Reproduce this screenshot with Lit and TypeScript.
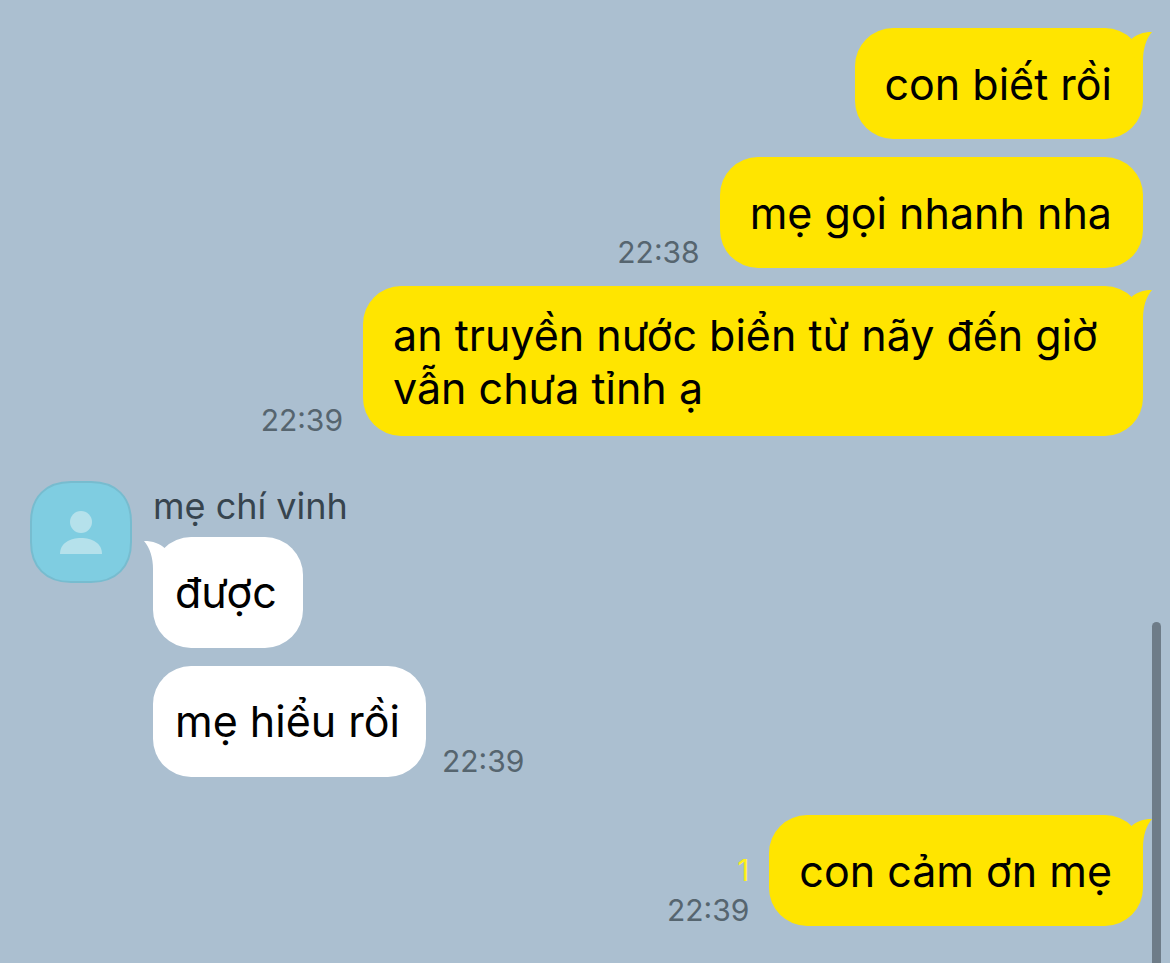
import { LitElement, html, svg, css, nothing } from "lit";
import { customElement, property } from "lit/decorators.js";

interface Message {
  text: string;
  time?: string;
  unread?: number;
  tail?: boolean;
}

interface Group {
  mine: boolean;
  sender?: string;
  messages: Message[];
}

const GROUPS: Group[] = [
  {
    mine: true,
    messages: [
      { text: "con biết rồi", tail: true },
      { text: "mẹ gọi nhanh nha", time: "22:38" },
      { text: "an truyền nước biển từ nãy đến giờ vẫn chưa tỉnh ạ", time: "22:39", tail: true },
    ],
  },
  {
    mine: false,
    sender: "mẹ chí vinh",
    messages: [{ text: "được", tail: true }, { text: "mẹ hiểu rồi", time: "22:39" }],
  },
  {
    mine: true,
    messages: [{ text: "con cảm ơn mẹ", time: "22:39", unread: 1, tail: true }],
  },
];

@customElement("chat-message")
export class ChatMessage extends LitElement {
  @property({ attribute: false }) message!: Message;
  @property({ type: Boolean, reflect: true }) mine = false;

  static styles = css`
    :host {
      display: flex;
      align-items: flex-end;
      gap: 16px;
    }
    :host([mine]) {
      flex-direction: row-reverse;
      gap: 20px;
    }
    .bubble {
      position: relative;
      box-sizing: border-box;
      display: flex;
      align-items: center;
      min-height: 111px;
      max-width: min(780px, 70vw);
      padding: 22px 26px 22px 22px;
      border-radius: 38px;
      background: #fff;
      color: #000;
      font-size: 43px;
      line-height: 53px;
    }
    :host([mine]) .bubble {
      padding: 23px 31px 21px 30px;
      background: #ffe500;
    }
    .text {
      margin: 0;
    }
    .tail {
      position: absolute;
      top: 4px;
      left: -9px;
      width: 30px;
      height: 35px;
      fill: #fff;
    }
    :host([mine]) .tail {
      left: auto;
      right: -9px;
      fill: #ffe500;
    }
    .meta {
      display: flex;
      flex-direction: column;
      align-items: flex-end;
      font-size: 30px;
      line-height: 32px;
      color: #56656f;
    }
    .unread {
      color: #fff01a;
      line-height: 48px;
    }
  `;

  private tail() {
    const path = this.mine
      ? svg`<path d="M9 7.500C14 2.500 21 0 30 0C24 7 21 17 21 28V35L2 12Z" />`
      : svg`<path d="M21 7.500C16 2.500 9 0 0 0C6 7 9 17 9 28V35L28 12Z" />`;
    return html`<svg class="tail" viewBox="0 0 30 35" aria-hidden="true">${path}</svg>`;
  }

  render() {
    const { text, time, unread, tail } = this.message;
    return html`
      <div class="bubble">
        ${tail ? this.tail() : nothing}
        <p class="text">${text}</p>
      </div>
      ${time
        ? html`<div class="meta">
            ${unread ? html`<span class="unread">${unread}</span>` : nothing}
            <time>${time}</time>
          </div>`
        : nothing}
    `;
  }
}

@customElement("app-root")
export class AppRoot extends LitElement {
  static styles = css`
    :host {
      display: block;
      position: relative;
      box-sizing: border-box;
      min-height: 100vh;
      padding: 28px 27px 37px 30px;
      background: #abbfd0;
      font-family: Inter, "Noto Sans", sans-serif;
    }
    .group {
      display: flex;
      gap: 21px;
    }
    .stack {
      flex: 1;
      display: flex;
      flex-direction: column;
      gap: 18px;
    }
    .theirs {
      margin: 45px 0 38px;
    }
    .avatar {
      flex: none;
      width: 102px;
      height: 102px;
    }
    .sender {
      margin: 0 0 -12px;
      font-size: 36px;
      font-weight: 400;
      line-height: 50px;
      color: #37444e;
    }
    .scrollbar {
      position: absolute;
      top: 622px;
      right: 9px;
      bottom: 0;
      width: 9px;
      border-radius: 5px 5px 0 0;
      background: #6e7c88;
    }
  `;

  private avatar() {
    return html`<svg class="avatar" viewBox="0 0 102 102" role="img" aria-label="Avatar">
      <path
        d="M41 1H61C86 1 101 16 101 41V61C101 86 86 101 61 101H41C16 101 1 86 1 61V41C1 16 16 1 41 1Z"
        fill="#7fcde1"
        stroke="#77bccf"
        stroke-width="2"
      />
      <circle cx="51" cy="41" r="11" fill="#b5e1eb" />
      <path d="M30 73C30 62 40 57 51 57S72 62 72 73Z" fill="#b5e1eb" />
    </svg>`;
  }

  render() {
    return html`
      ${GROUPS.map(
        (group) => html`<section class="group ${group.mine ? "" : "theirs"}">
          ${group.mine ? nothing : this.avatar()}
          <div class="stack">
            ${group.sender ? html`<h2 class="sender">${group.sender}</h2>` : nothing}
            ${group.messages.map(
              (message) =>
                html`<chat-message .message=${message} ?mine=${group.mine}></chat-message>`,
            )}
          </div>
        </section>`,
      )}
      <div class="scrollbar"></div>
    `;
  }
}
